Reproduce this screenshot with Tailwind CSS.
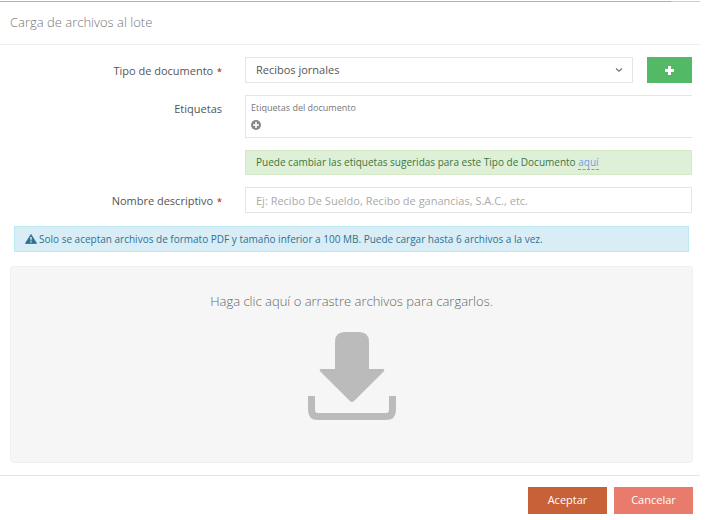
<!DOCTYPE html>
<html lang="es">
  <head>
    <meta charset="UTF-8" />
    <meta name="viewport" content="width=device-width, initial-scale=1.0" />
    <title>Carga de archivos al lote</title>
    <script src="https://cdn.jsdelivr.net/npm/@tailwindcss/browser@4"></script>
  </head>
  <body class="bg-white font-['Open_Sans',sans-serif] text-[11px] text-[#555]">
    <main class="mr-2.5 pt-px">
      <div class="flex h-px">
        <div class="flex-1 bg-[#b0b0b0]"></div>
        <div class="w-[29px] bg-[#cfcfcf]"></div>
      </div>
      <header class="border-b border-[#efefef] px-2.5 pt-2.5 pb-3">
        <h1 class="text-[13px] leading-5 font-light text-[#777]">Carga de archivos al lote</h1>
      </header>

      <form>
        <div class="grid grid-cols-[222px_1fr] gap-x-[23px] gap-y-3 pt-3 pr-2">
          <label for="tipo" class="pt-1.5 text-right leading-4"
            >Tipo de documento <span class="ml-px text-[9px] font-semibold text-[#e02222]">*</span></label
          >
          <div class="flex gap-3.5">
            <div class="relative flex-1">
              <select
                id="tipo"
                class="h-[26px] w-full appearance-none border border-[#e5e5e5] bg-white px-2.5 text-[11px] text-[#555] outline-none"
              >
                <option>Recibos jornales</option>
              </select>
              <svg
                class="pointer-events-none absolute top-2.5 right-2.5 h-1.5 w-2"
                viewBox="0 0 8 6"
                fill="none"
                stroke="#777"
                stroke-width="1.3"
              >
                <path d="M1 1.500 4 4.200 7 1.500" />
              </svg>
            </div>
            <button
              type="button"
              aria-label="Agregar tipo de documento"
              class="flex h-[26px] w-[45px] items-center justify-center bg-[#53b966]"
            >
              <svg class="h-[9px] w-[9px]" viewBox="0 0 9 9" fill="#fff">
                <path d="M3 0h3v3h3v3H6v3H3V6H0V3h3z" />
              </svg>
            </button>
          </div>

          <span class="pt-1.5 text-right leading-4">Etiquetas</span>
          <div class="h-[43px] border border-r-0 border-[#e5e5e5] px-[5px] pt-1.5">
            <p class="text-[9px] leading-3 text-[#777]">Etiquetas del documento</p>
            <button type="button" aria-label="Agregar etiqueta" class="mt-1.5 block">
              <svg class="h-2.5 w-2.5" viewBox="0 0 10 10">
                <circle cx="5" cy="5" r="5" fill="#888" />
                <path d="M4.200 2h1.600v2.200H8v1.600H5.800V8H4.200V5.800H2V4.200h2.200z" fill="#fff" />
              </svg>
            </button>
          </div>

          <p
            class="col-start-2 border border-[#d6e9c6] bg-[#dff0d8] px-2.5 text-[10px] leading-[23px] text-[#3c763d]"
          >
            Puede cambiar las etiquetas sugeridas para este Tipo de Documento
            <a href="#" class="border-b border-dashed border-[#6f9fe0] text-[#6f9fe0]">aquí</a>
          </p>

          <label for="nombre" class="pt-1.5 text-right leading-4"
            >Nombre descriptivo <span class="ml-px text-[9px] font-semibold text-[#e02222]">*</span></label
          >
          <input
            id="nombre"
            type="text"
            placeholder="Ej: Recibo De Sueldo, Recibo de ganancias, S.A.C., etc."
            class="h-[26px] w-full border border-[#e5e5e5] px-2.5 text-[11px] outline-none placeholder:text-[#aaa]"
          />
        </div>

        <div
          class="mt-[13px] mr-[11px] ml-3.5 flex h-[26px] items-center gap-0.5 border border-[#bce8f1] bg-[#d9edf7] px-2.5 text-[10px] text-[#31708f]"
        >
          <svg class="h-2.5 w-3" viewBox="0 0 12 10">
            <path
              d="M6 .4 11.600 9.400H.4z"
              fill="#31708f"
              stroke="#31708f"
              stroke-width=".8"
              stroke-linejoin="round"
            />
            <path d="M5.200 3h1.600L6.500 6.400h-1zM5.300 7.200h1.400v1.300H5.300z" fill="#d9edf7" />
          </svg>
          <p>
            Solo se aceptan archivos de formato PDF y tamaño inferior a 100 MB. Puede cargar hasta 6
            archivos a la vez.
          </p>
        </div>

        <label
          for="archivos"
          class="mt-3.5 mr-[7px] ml-2.5 flex h-[197px] cursor-pointer flex-col items-center rounded-sm border border-[#f0f0f0] bg-[#f6f6f6] pt-6"
        >
          <span class="text-[13px] leading-5 font-light text-[#666]"
            >Haga clic aquí o arrastre archivos para cargarlos.</span
          >
          <svg class="mt-[21px] h-[88px] w-[88px]" viewBox="0 0 88 88" fill="#bbb">
            <path
              d="M37 0h14q10 0 10 10v27h13.500q3 .3 1.200 2.600L46 69q-2 1.800-4 0L12.300 39.600Q10.500 37.300 13.500 37H27V10Q27 0 37 0z"
            />
            <path d="M0 64h7v14q0 3 3 3h68q3 0 3-3V64h7v14q0 10-10 10H10Q0 88 0 78z" />
          </svg>
          <input id="archivos" type="file" multiple class="sr-only" />
        </label>

        <footer
          class="mt-3 flex justify-end gap-[7px] border-t border-[#e5e5e5] pt-[11px] pr-[7px] pb-1.5 text-white"
        >
          <button type="submit" class="h-[27px] w-[79px] bg-[#c96138]">Aceptar</button>
          <button type="button" class="h-[27px] w-[79px] bg-[#e97b6c]">Cancelar</button>
        </footer>
      </form>
    </main>
  </body>
</html>
